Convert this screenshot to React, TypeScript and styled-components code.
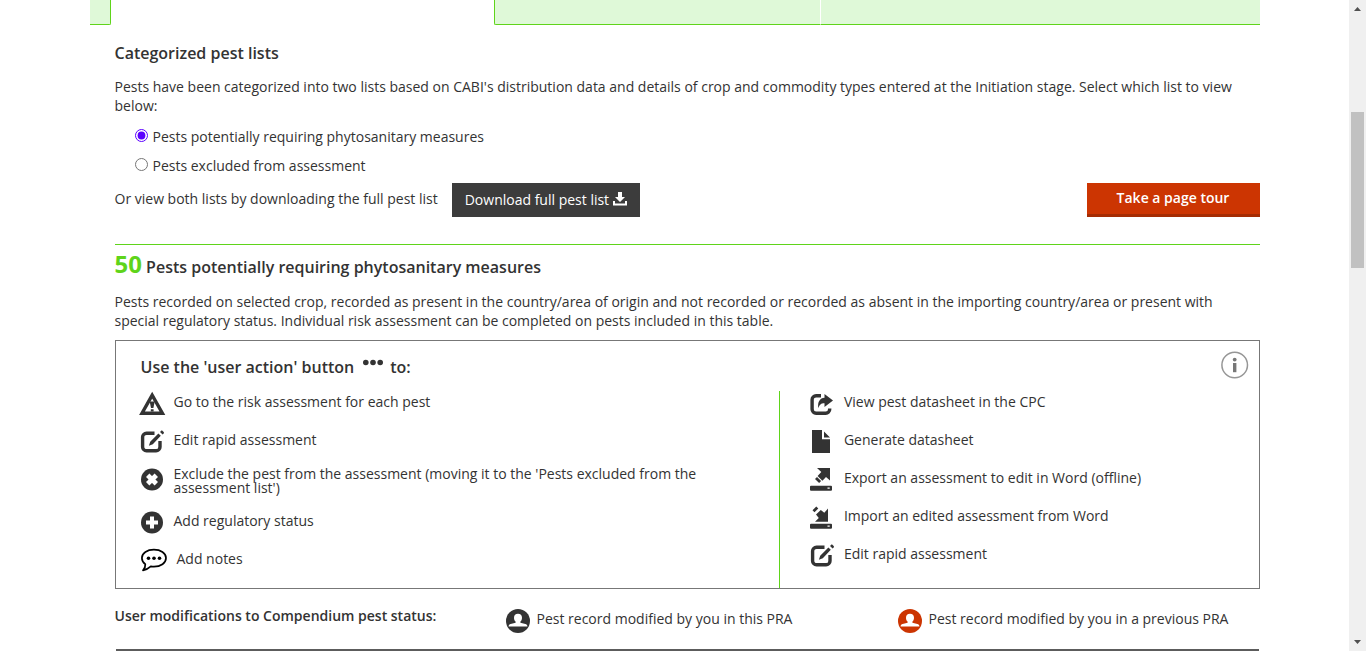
import React from "react";
import styled, { createGlobalStyle } from "styled-components";

const GlobalStyle = createGlobalStyle`
  *, *::before, *::after { box-sizing: border-box; }
  body {
    margin: 0;
    background: #fff;
    color: #333;
    font: 400 14px/19px "Open Sans", "Noto Sans", sans-serif;
  }
  h1, h2, h3, p, ul { margin: 0; padding: 0; }
`;

const Shell = styled.div`
  display: grid;
  grid-template-columns: minmax(0, 1fr) 17px;
  min-height: 100vh;
`;

const Page = styled.main`
  width: 100%;
  max-width: 1170px;
  margin: 0 auto;
`;

const Steps = styled.div`
  display: grid;
  grid-template-columns: 21px 383fr 326fr 440fr;
  height: 25px;
`;

const Step = styled.div<{ $edge?: "left" | "right"; $current?: boolean; $split?: boolean }>`
  background: ${(p) => (p.$current ? "#fff" : "#dff9d8")};
  border-bottom: ${(p) => (p.$current ? "0" : "1px solid #5fd41a")};
  border-left: ${(p) => (p.$edge === "left" ? "1px solid #5fd41a" : p.$split ? "1px solid #fff" : "0")};
  border-right: ${(p) => (p.$edge === "right" ? "1px solid #5fd41a" : "0")};
  border-bottom-left-radius: ${(p) => (p.$edge === "left" ? "2px" : "0")};
  border-bottom-right-radius: ${(p) => (p.$edge === "right" ? "2px" : "0")};
`;

const Content = styled.div`
  padding-left: 25px;
`;

const Title = styled.h1`
  padding-top: 17px;
  font-size: 16px;
  line-height: 22px;
  font-weight: 600;
`;

const Text = styled.p`
  margin-top: 13px;
`;

const Options = styled.div`
  display: flex;
  flex-direction: column;
  gap: 10px;
  padding: 12px 0 8px 20px;
`;

const Option = styled.label`
  display: flex;
  align-items: flex-start;
  gap: 5px;
`;

const Radio = styled.input`
  width: 13px;
  height: 13px;
  margin: 2px 0 0;
  accent-color: #5b00ff;
`;

const Actions = styled.div`
  display: flex;
  align-items: flex-start;
  height: 61px;
`;

const ActionText = styled.span`
  padding: 6px 14px 0 0;
`;

const DownloadButton = styled.button`
  display: flex;
  align-items: center;
  gap: 4px;
  height: 34px;
  padding: 0 13px;
  border: 0;
  background: #3c3c3c;
  color: #fff;
  font: 400 14px/20px "Open Sans", "Noto Sans", sans-serif;
`;

const TourButton = styled.button`
  width: 173px;
  height: 34px;
  margin-left: auto;
  padding: 0 0 1px;
  border: 0;
  border-bottom: 3px solid #a52c03;
  background: #cc3502;
  color: #fff;
  font: 600 14px/20px "Open Sans", "Noto Sans", sans-serif;
`;

const ListTitle = styled.h2`
  padding-top: 2px;
  border-top: 1px solid #5fd41a;
  font-size: 16px;
  line-height: 33px;
  font-weight: 600;
`;

const Count = styled.span`
  color: #5fd41a;
  font-size: 24px;
  font-weight: 700;
`;

const ListText = styled.p`
  padding: 8px 20px 10px 0;
`;

const Box = styled.section`
  border: 1px solid #777;
  padding: 11px 10px 0 24px;
`;

const BoxHead = styled.div`
  display: flex;
  justify-content: space-between;
  align-items: flex-start;
  height: 39px;
`;

const BoxTitle = styled.h3`
  display: flex;
  gap: 8px;
  padding: 4px 0 0 1px;
  font-size: 16px;
  line-height: 22px;
  font-weight: 600;
`;

const InfoButton = styled.button`
  display: flex;
  padding: 0;
  border: 0;
  background: none;
`;

const Columns = styled.div`
  display: grid;
  grid-template-columns: 640fr 470fr;
`;

const Column = styled.ul<{ $ruled?: boolean }>`
  height: 197px;
  list-style: none;
  border-left: ${(p) => (p.$ruled ? "1px solid #5fd41a" : "0")};
  padding-left: ${(p) => (p.$ruled ? "30px" : "0")};
`;

const Item = styled.li<{ $tall?: boolean }>`
  display: flex;
  align-items: flex-start;
  gap: 9px;
  height: ${(p) => (p.$tall ? "43px" : "38px")};
`;

const ItemText = styled.span<{ $tight?: boolean; $inset?: boolean }>`
  max-width: 550px;
  padding-top: ${(p) => (p.$tight ? "0" : "1px")};
  padding-left: ${(p) => (p.$inset ? "3px" : "0")};
  line-height: ${(p) => (p.$tight ? "14px" : "19px")};
`;

const Legend = styled.div`
  display: grid;
  grid-template-columns: 391fr 392fr 362fr;
  height: 60px;
  padding-top: 17px;
`;

const LegendTitle = styled.strong`
  font-weight: 600;
`;

const LegendItem = styled.span`
  display: flex;
  align-items: flex-start;
  gap: 7px;
  padding-top: 3px;
`;

const TableTop = styled.div`
  height: 2px;
  margin: 0 1px;
  background: #5c5c5c;
`;

const ScrollTrack = styled.div`
  display: flex;
  flex-direction: column;
  align-items: center;
  justify-content: space-between;
  background: #f0f0f0;
  padding: 7px 0;
`;

const ScrollUpper = styled.div`
  display: flex;
  flex-direction: column;
  align-items: center;
  gap: 101px;
`;

const Thumb = styled.div`
  width: 13px;
  height: 156px;
  background: #c1c1c1;
`;

const Svg = styled.svg`
  display: block;
  flex: none;
  overflow: visible;
`;

const DownloadIcon = () => (
  <Svg width="14" height="16" viewBox="0 0 14 16" fill="#fff">
    <path d="M5 0h4v5h3L7 10 2 5h3z" />
    <path d="M0 9h2v2.500h10V9h2v4.500H0z" />
  </Svg>
);

const WarningIcon = () => (
  <Svg width="25" height="26" viewBox="0 0 25 26">
    <path d="M12.200 4.200 2 22.200h20.400z" fill="none" stroke="#333" strokeWidth="3.400" />
    <path d="M9.700 10.500h5L13.400 17h-2.400zM10.800 18.200h2.800v2.200h-2.800z" fill="#333" />
  </Svg>
);

const EditIcon = () => (
  <Svg width="25" height="26" viewBox="0 0 25 26">
    <path d="M14.500 4.200H6.500a3.900 3.900 0 0 0-3.900 3.900v9.800a3.900 3.900 0 0 0 3.900 3.900h9.600a3.900 3.900 0 0 0 3.900-3.900v-6" fill="none" stroke="#333" strokeWidth="3.400" />
    <path d="m18.400 4.500 2.400 2.300-8 8.500-3.900 1.500 1.300-4.100zM20 3l1-1.100c.5-.5 1.100-.4 1.600 0l1.100 1.100c.4.500.4 1.100 0 1.500L22.600 5.600z" fill="#333" />
  </Svg>
);

const CrossIcon = () => (
  <Svg width="25" height="26" viewBox="0 0 25 26">
    <circle cx="12" cy="12.500" r="11" fill="#333" />
    <path d="m7.700 8.200 8.600 8.600m0-8.600-8.600 8.600" stroke="#fff" strokeWidth="4.800" />
  </Svg>
);

const PlusIcon = () => (
  <Svg width="25" height="26" viewBox="0 0 25 26">
    <circle cx="12" cy="12.500" r="11" fill="#333" />
    <path d="M12 6.500v12M6 12.500h12" stroke="#fff" strokeWidth="4" />
  </Svg>
);

const NotesIcon = () => (
  <Svg width="25" height="26" viewBox="0 0 25 26">
    <path d="M5.300 16.300C3 14.600 1.900 12.300 1.900 10c0-5 5.300-8.300 12-8.300S26 5 26 10s-5.300 8.700-12 8.700c-1.100 0-2.200-.1-3.200-.3C8.500 20.500 6.500 21.700 3 22.300c1.600-1.700 2.500-3.600 2.300-6z" fill="#fff" stroke="#000" strokeWidth="1.700" strokeLinejoin="round" />
    <g fill="#000"><circle cx="8.500" cy="10.200" r="1.800" /><circle cx="14" cy="10.200" r="1.800" /><circle cx="19.500" cy="10.200" r="1.800" /></g>
  </Svg>
);

const ShareIcon = () => (
  <Svg width="25" height="26" viewBox="0 0 25 26">
    <path d="M11 4.700H6.100a4 4 0 0 0-4 4v9.600a4 4 0 0 0 4 4h9.600a4 4 0 0 0 4-4v-.8" fill="none" stroke="#333" strokeWidth="3.400" />
    <path d="M14.500 3 23 9.400 14.500 16v-3.800c-3.200-.1-5 1.200-6.200 5-.9-6.600 1.700-10.200 6.200-10.500z" fill="#333" />
  </Svg>
);

const FileIcon = () => (
  <Svg width="25" height="26" viewBox="0 0 25 26">
    <path d="M2 1h10v9.200h8V24H2zM14 2.500l6 6h-6z" fill="#333" />
  </Svg>
);

const DriveBase = () => (
  <path d="M1 18.700h20a1 1 0 0 1 1 1v3.100a1 1 0 0 1-1 1H1a1 1 0 0 1-1-1v-3.100a1 1 0 0 1 1-1zM17.500 20.500v1.200h2.200v-1.200z" fill="#333" fillRule="evenodd" />
);

const ExportIcon = () => (
  <Svg width="25" height="26" viewBox="0 0 25 26">
    <path d="M7 1h13v12.500l-4-3.500-3.600 3.800-4.800-4.900L11.300 5zM7 10l4.100 4.100-2 1.800L5 11.900z" fill="#333" />
    <DriveBase />
  </Svg>
);

const ImportIcon = () => (
  <Svg width="25" height="26" viewBox="0 0 25 26">
    <path d="M18 3.500v13.200H5L8.800 13 6 9.500l4.800-4.400 3.500 2.600zM6.300 1.500l2 2L4.500 7.300 2.500 5.300z" fill="#333" />
    <DriveBase />
  </Svg>
);

const InfoIcon = () => (
  <Svg width="28" height="28" viewBox="0 0 28 28">
    <circle cx="13.700" cy="13" r="12.800" fill="none" stroke="#969696" strokeWidth="1.500" />
    <circle cx="13.700" cy="7.600" r="1.900" fill="#777" />
    <path d="M12 11h3.400v9.200H12z" fill="#777" />
  </Svg>
);

const DotsIcon = () => (
  <Svg width="20" height="12" viewBox="0 0 20 12" fill="#333">
    <circle cx="3.800" cy="6.500" r="2.800" /><circle cx="11" cy="6.500" r="2.800" /><circle cx="18.200" cy="6.500" r="2.800" />
  </Svg>
);

const UserIcon = ({ color }: { color: string }) => (
  <Svg width="24" height="24" viewBox="0 0 24 24">
    <circle cx="12" cy="12" r="12" fill={color} />
    <path d="M12 4.800c2.500 0 4 1.500 4 3.900 0 1.700-.6 3-1.600 3.900v1.100l5 1.300c1.300.4 2 1.100 2 2.600H2.600c0-1.500.7-2.200 2-2.600l5-1.300v-1.100C8.600 11.700 8 10.400 8 8.700c0-2.400 1.500-3.900 4-3.900z" fill="#fff" />
  </Svg>
);

const Arrow = ({ up }: { up?: boolean }) => (
  <Svg width="7" height="4" viewBox="0 0 7 4">
    <path d={up ? "M0 4 3.500 0 7 4z" : "M0 0h7L3.500 4z"} fill="#505050" />
  </Svg>
);

type Entry = { icon: React.ReactNode; text: string; tall?: boolean; inset?: boolean };

const leftEntries: Entry[] = [
  { icon: <WarningIcon />, text: "Go to the risk assessment for each pest" },
  { icon: <EditIcon />, text: "Edit rapid assessment" },
  {
    icon: <CrossIcon />,
    text: "Exclude the pest from the assessment (moving it to the 'Pests excluded from the assessment list')",
    tall: true,
  },
  { icon: <PlusIcon />, text: "Add regulatory status" },
  { icon: <NotesIcon />, text: "Add notes", inset: true },
];

const rightEntries: Entry[] = [
  { icon: <ShareIcon />, text: "View pest datasheet in the CPC" },
  { icon: <FileIcon />, text: "Generate datasheet" },
  { icon: <ExportIcon />, text: "Export an assessment to edit in Word (offline)" },
  { icon: <ImportIcon />, text: "Import an edited assessment from Word" },
  { icon: <EditIcon />, text: "Edit rapid assessment" },
];

const EntryList = ({ entries, ruled }: { entries: Entry[]; ruled?: boolean }) => (
  <Column $ruled={ruled}>
    {entries.map((e) => (
      <Item key={e.text} $tall={e.tall}>
        {e.icon}
        <ItemText $tight={e.tall} $inset={e.inset}>{e.text}</ItemText>
      </Item>
    ))}
  </Column>
);

export default function App() {
  return (
    <>
      <GlobalStyle />
      <Shell>
        <Page>
          <Steps>
            <Step $edge="right" />
            <Step $current />
            <Step $edge="left" />
            <Step $split />
          </Steps>
          <Content>
            <Title>Categorized pest lists</Title>
            <Text>
              Pests have been categorized into two lists based on CABI's distribution data and details of crop and
              commodity types entered at the Initiation stage. Select which list to view below:
            </Text>
            <Options>
              <Option>
                <Radio type="radio" name="list" defaultChecked />
                <span>Pests potentially requiring phytosanitary measures</span>
              </Option>
              <Option>
                <Radio type="radio" name="list" />
                <span>Pests excluded from assessment</span>
              </Option>
            </Options>
            <Actions>
              <ActionText>Or view both lists by downloading the full pest list</ActionText>
              <DownloadButton type="button">
                Download full pest list
                <DownloadIcon />
              </DownloadButton>
              <TourButton type="button">Take a page tour</TourButton>
            </Actions>
            <ListTitle>
              <Count>50</Count> Pests potentially requiring phytosanitary measures
            </ListTitle>
            <ListText>
              Pests recorded on selected crop, recorded as present in the country/area of origin and not recorded or
              recorded as absent in the importing country/area or present with special regulatory status. Individual
              risk assessment can be completed on pests included in this table.
            </ListText>
            <Box>
              <BoxHead>
                <BoxTitle>
                  Use the 'user action' button
                  <DotsIcon />
                  to:
                </BoxTitle>
                <InfoButton type="button" aria-label="Information">
                  <InfoIcon />
                </InfoButton>
              </BoxHead>
              <Columns>
                <EntryList entries={leftEntries} />
                <EntryList entries={rightEntries} ruled />
              </Columns>
            </Box>
            <Legend>
              <LegendTitle>User modifications to Compendium pest status:</LegendTitle>
              <LegendItem>
                <UserIcon color="#333" />
                <span>Pest record modified by you in this PRA</span>
              </LegendItem>
              <LegendItem>
                <UserIcon color="#cc3502" />
                <span>Pest record modified by you in a previous PRA</span>
              </LegendItem>
            </Legend>
            <TableTop />
          </Content>
        </Page>
        <ScrollTrack aria-hidden="true">
          <ScrollUpper>
            <Arrow up />
            <Thumb />
          </ScrollUpper>
          <Arrow />
        </ScrollTrack>
      </Shell>
    </>
  );
}
